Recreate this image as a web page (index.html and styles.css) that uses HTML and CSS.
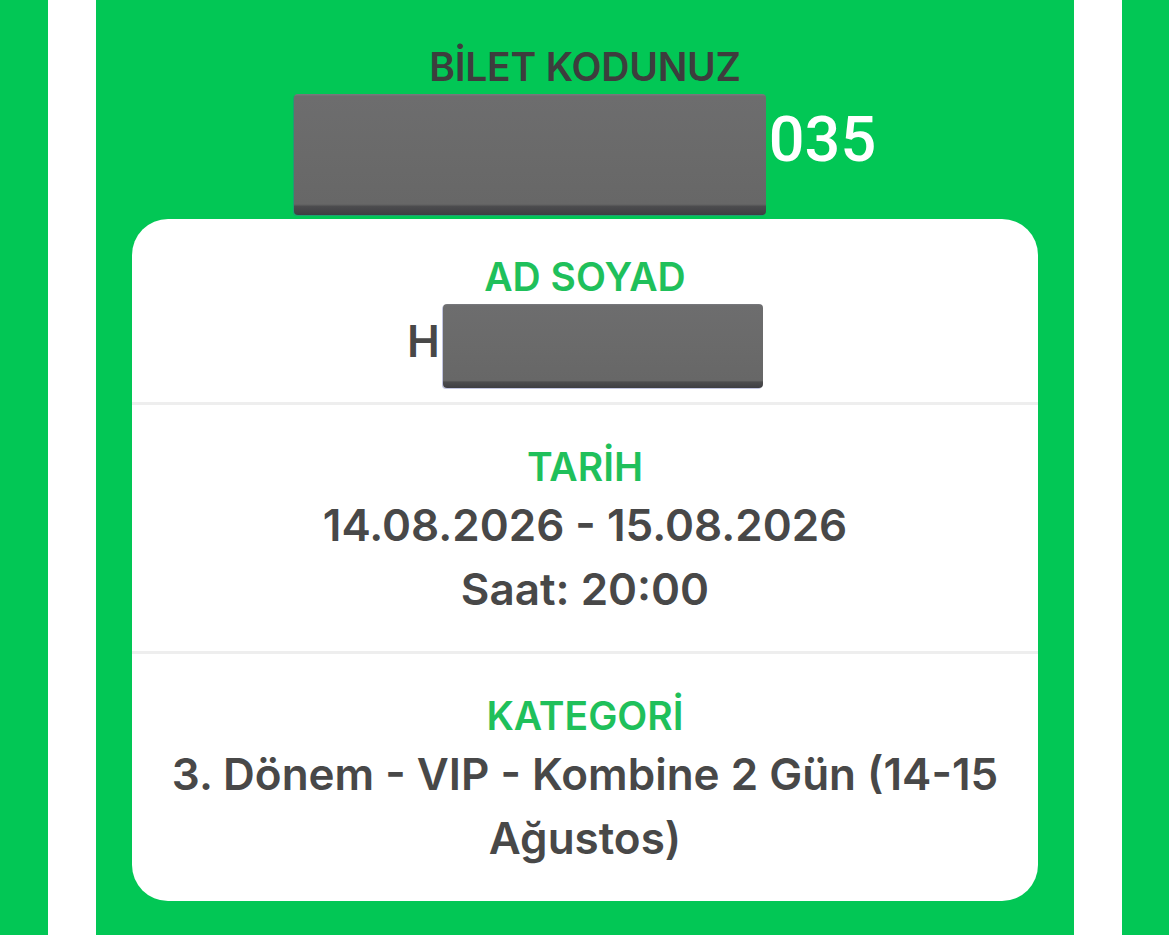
FILE: index.html
```html
<!DOCTYPE html>
<html lang="tr">
<head>
<meta charset="utf-8">
<title>Bilet</title>
<link rel="stylesheet" href="styles.css">
</head>
<body>
<div class="page">
  <div class="edge"></div>
  <div class="strip"></div>
  <main class="ticket">
    <h1 class="code-title">BİLET KODUNUZ</h1>
    <div class="code-row">
      <div class="redact redact-code"></div>
      <span class="code-tail">035</span>
    </div>
    <section class="card">
      <div class="field field-name">
        <div class="label">AD SOYAD</div>
        <div class="name-row">
          <span class="value name-initial">H</span>
          <div class="redact redact-name"></div>
        </div>
      </div>
      <div class="field">
        <div class="label">TARİH</div>
        <div class="value">14.08.2026 - 15.08.2026</div>
        <div class="value">Saat: 20:00</div>
      </div>
      <div class="field field-last">
        <div class="label">KATEGORİ</div>
        <div class="value">3. Dönem - VIP - Kombine 2 Gün <span class="nowrap">(14-15</span> Ağustos)</div>
      </div>
    </section>
  </main>
  <div class="strip"></div>
  <div class="edge"></div>
</div>
</body>
</html>
```
FILE: styles.css
```css
* { box-sizing: border-box; }
html, body { margin: 0; padding: 0; }
body {
  background: #02c755;
  font-family: Inter, "Noto Sans", sans-serif;
  height: 935px;
  overflow: hidden;
}
.page {
  display: grid;
  grid-template-columns: 48px 48px 978px 48px 47px;
  height: 935px;
}
.edge { background: #02c755; }
.strip { background: #ffffff; }
.ticket {
  background: #02c755;
  display: flex;
  flex-direction: column;
  align-items: center;
  padding-top: 41px;
}
.code-title {
  margin: 0;
  font-family: Inter, sans-serif;
  font-weight: 600;
  font-size: 39px;
  line-height: 52px;
  color: #3d3d3d;
  letter-spacing: -0.2px;
}
.code-row {
  display: flex;
  align-items: flex-start;
  gap: 3px;
  margin-top: 1px;
}
.redact {
  border-radius: 4px;
  background: linear-gradient(to bottom, #7a7b80 0, #6d6d6e 2%, #6a6a6a 50%, #676767 91%, #4c4c4e 93%, #3e3e42 100%);
  box-shadow: -1px 1px 0 rgba(80, 90, 170, 0.35);
}
.redact-code { width: 472px; height: 121px; }
.code-tail {
  font-family: Roboto, sans-serif;
  font-weight: 500;
  font-size: 63px;
  line-height: 63px;
  color: #ffffff;
  margin-top: 14px;
}
.card {
  margin-top: 4px;
  width: 906px;
  background: #ffffff;
  border-radius: 36px;
  overflow: hidden;
}
.field {
  display: flex;
  flex-direction: column;
  align-items: center;
  text-align: center;
  padding: 36px 20px 30px;
  border-top: 3px solid #eeeeee;
}
.field:first-child {
  border-top: none;
  padding: 32px 20px 14px;
}
.field-last { padding-bottom: 31px; }
.label {
  font-weight: 600;
  font-size: 39px;
  line-height: 52px;
  color: #1fc05b;
}
.value {
  font-weight: 600;
  font-size: 44px;
  line-height: 64px;
  color: #484848;
}
.nowrap { white-space: nowrap; }
.name-row {
  display: flex;
  align-items: flex-start;
  gap: 3px;
  margin-top: 1px;
}
.name-initial { margin-top: 5px; }
.redact-name { width: 320px; height: 84px; }
```
